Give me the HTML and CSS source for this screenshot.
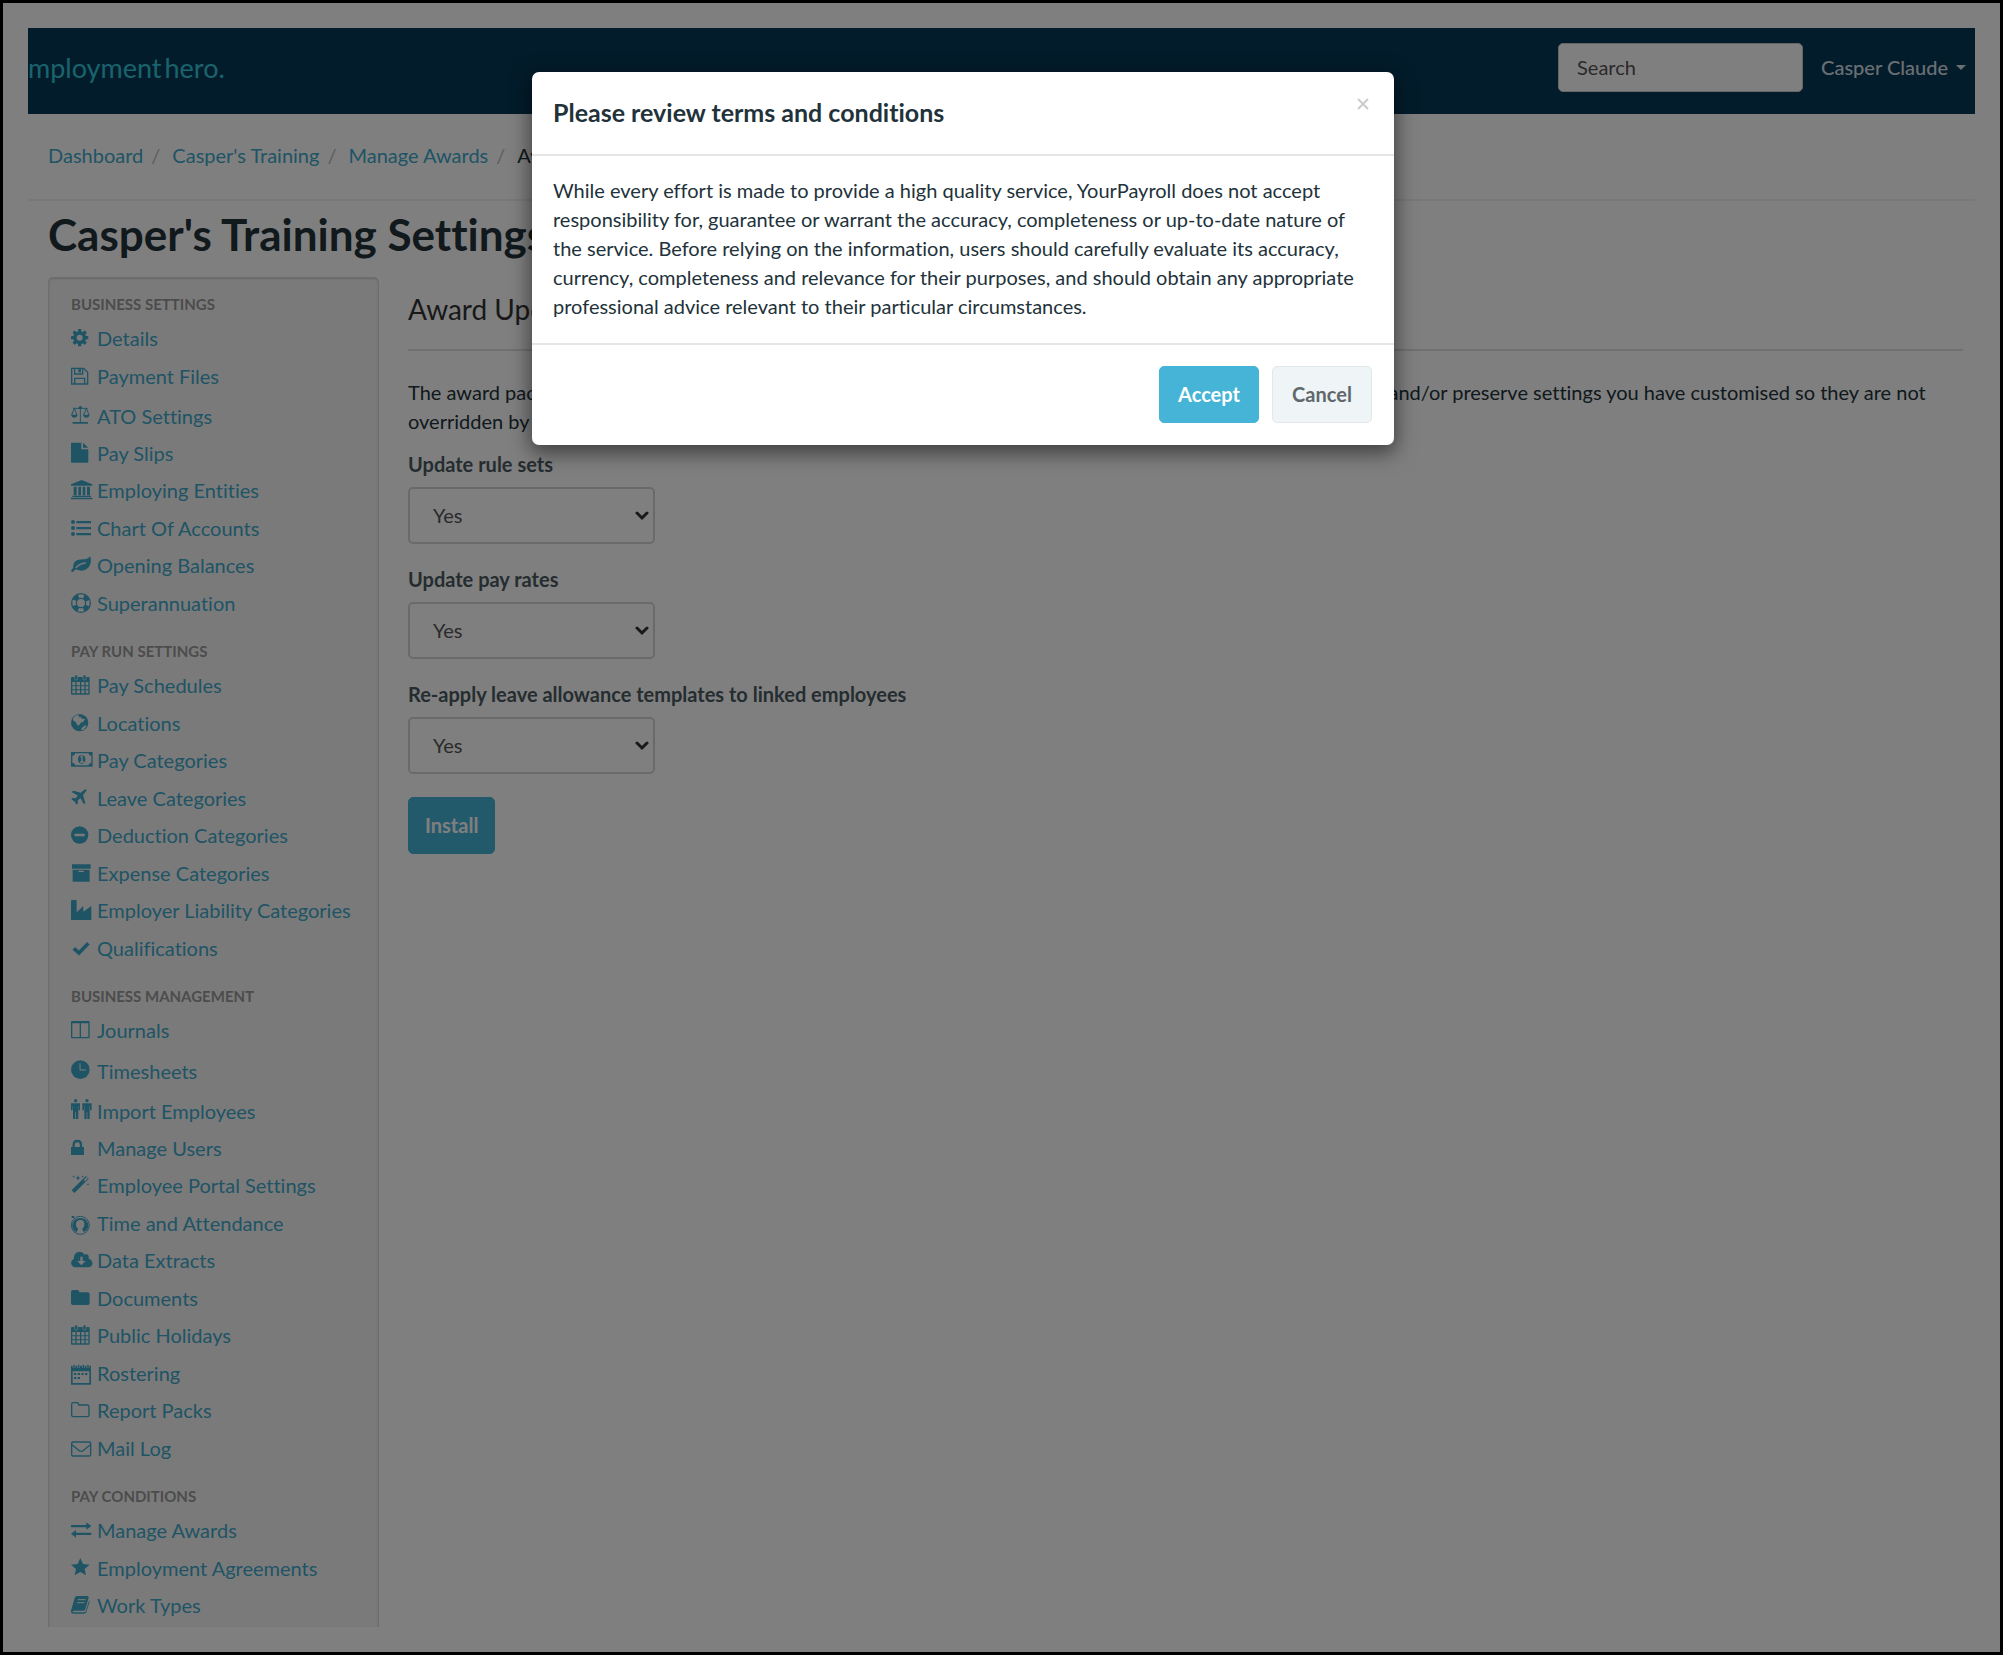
FILE: index.html
```html
<!DOCTYPE html>
<html lang="en">
<head>
<meta charset="utf-8">
<title>Award Update</title>
<link rel="stylesheet" href="styles.css">
</head>
<body>
<svg class="sprite" aria-hidden="true">
  <symbol id="cog" viewBox="0 0 66 66"><g fill="currentColor"><rect x="21" y="3" width="10" height="52" rx="2"/><rect x="21" y="3" width="10" height="52" rx="2" transform="rotate(45 26 29)"/><rect x="21" y="3" width="10" height="52" rx="2" transform="rotate(90 26 29)"/><rect x="21" y="3" width="10" height="52" rx="2" transform="rotate(135 26 29)"/></g><circle cx="26" cy="29" r="14" fill="none" stroke="currentColor" stroke-width="11"/><circle cx="26" cy="29" r="9" fill="#f5f5f5"/></symbol>
  <symbol id="floppy" viewBox="0 0 66 66"><path d="M2 7h36l12 12v35H2zM11 54V37h30v17M11 7v17h24V7" fill="none" stroke="currentColor" stroke-width="4"/><path d="M22 7h8v12h-8z" fill="currentColor"/></symbol>
  <symbol id="scale" viewBox="0 0 66 66"><path d="M28 0v48M6 7h44M10 7L2 27M10 7l8 20M46 7l-8 20M46 7l8 20" fill="none" stroke="currentColor" stroke-width="3"/><path d="M0 26h20q-2 9-10 9T0 26zM36 26h20q-2 9-10 9t-10-9zM5 48h46v5H5z" fill="currentColor"/><circle cx="28" cy="5" r="5" fill="currentColor"/></symbol>
  <symbol id="file" viewBox="0 0 66 66"><path d="M0 1q0-2 2-2h29v20h21v38q0 2-2 2H2q-2 0-2-2zM36-1l16 15H36z" fill="currentColor"/></symbol>
  <symbol id="bank" viewBox="0 0 66 66"><path d="M32 0l32 13v4H0v-4zM8 20h9v26H8zM22 20h8v26h-8zM35 20h8v26h-8zM48 20h9v26h-9zM4 47h56v4H4zM0 53h64v5H0z" fill="currentColor"/></symbol>
  <symbol id="list" viewBox="0 0 66 66"><path d="M16 9h44v7H16zM16 27h44v7H16zM16 45h44v7H16z" fill="currentColor"/><circle cx="6" cy="12" r="6" fill="currentColor"/><circle cx="6" cy="30" r="6" fill="currentColor"/><circle cx="6" cy="48" r="6" fill="currentColor"/></symbol>
  <symbol id="leaf" viewBox="0 0 66 66"><path d="M58 4c6 22-4 42-26 43-8 0-14-4-19-3-4 1-5 7-9 7-5-1-5-5 0-9 3-2 2-5 3-12C11 12 29 14 41 13c9-1 11-5 17-9z" fill="currentColor"/><path d="M15 38c8-9 15-13 28-14" fill="none" stroke="#f5f5f5" stroke-width="4" stroke-linecap="round"/></symbol>
  <symbol id="ring" viewBox="0 0 66 66"><circle cx="30" cy="30" r="28" fill="none" stroke="currentColor" stroke-width="4"/><circle cx="30" cy="30" r="14" fill="none" stroke="currentColor" stroke-width="4"/><circle cx="30" cy="30" r="21" fill="none" stroke="currentColor" stroke-width="13" stroke-dasharray="17 16" stroke-dashoffset="-8"/></symbol>
  <symbol id="calendar" viewBox="0 0 66 66"><path d="M0 9q0-3 3-3h50q3 0 3 3v47q0 3-3 3H3q-3 0-3-3zM4 21v10h9V21zm13 0v10h10V21zm14 0v10h9V21zm13 0v10h8V21zM4 34v9h9v-9zm13 0v9h10v-9zm14 0v9h9v-9zm13 0v9h8v-9zM4 46v9h9v-9zm13 0v9h10v-9zm14 0v9h9v-9zm13 0v9h8v-9z" fill="currentColor" fill-rule="evenodd"/><rect x="11" y="0" width="9" height="15" rx="4" fill="currentColor" stroke="#f5f5f5" stroke-width="2"/><rect x="36" y="0" width="9" height="15" rx="4" fill="currentColor" stroke="#f5f5f5" stroke-width="2"/></symbol>
  <symbol id="globe" viewBox="0 0 66 66"><circle cx="26" cy="29" r="26" fill="currentColor"/><path d="M10 11c5-5 10-5 15-4l-3 6 7-1 4 5 9 1-5 8-8 3-6 9-5-3-3-7-7-4-3-7zM33 44l10-8 3 4-8 10-8 1z" fill="#f5f5f5"/></symbol>
  <symbol id="money" viewBox="0 0 66 66"><path d="M0 6h65v44H0zM4 17v22q8 0 8 7h41q0-7 8-7V17q-8 0-8-7H12q0 7-8 7z" fill="currentColor" fill-rule="evenodd"/><ellipse cx="32" cy="28" rx="11" ry="13" fill="currentColor"/><path d="M28 21l5-3v17M27 36h12" fill="none" stroke="#f5f5f5" stroke-width="4"/></symbol>
  <symbol id="plane" viewBox="0 0 66 66"><path d="M46 4c2 5-3 10-10 17l7 24-4 4-11-19-8 8 1 8-4 4-6-9-10-7 4-4 8 1 8-8L2 12l5-4 23 6C37 8 42 3 46 4z" fill="currentColor"/></symbol>
  <symbol id="minus" viewBox="0 0 66 66"><circle cx="26" cy="30" r="26" fill="currentColor"/><rect x="11" y="26" width="30" height="8" rx="2" fill="#f5f5f5"/></symbol>
  <symbol id="archive" viewBox="0 0 66 66"><path d="M3 4h56v13H3zM5 20h51v36H5z" fill="currentColor"/><rect x="22" y="23" width="17" height="4" rx="2" fill="#f5f5f5"/></symbol>
  <symbol id="industry" viewBox="0 0 66 66"><path d="M0 60V3q0-3 3-3h11q3 0 3 3v34l20-19v17l24-17v42z" fill="currentColor"/></symbol>
  <symbol id="check" viewBox="0 0 66 66"><path d="M8 31l16 14 28-29" fill="none" stroke="currentColor" stroke-width="11"/></symbol>
  <symbol id="columns" viewBox="0 0 66 66"><path d="M0 6q0-3 3-3h50q3 0 3 3v46q0 3-3 3H3q-3 0-3-3zM4 10v41h22V10zm26 0v41h22V10z" fill="currentColor" fill-rule="evenodd"/></symbol>
  <symbol id="clock" viewBox="0 0 66 66"><circle cx="28" cy="26" r="28" fill="currentColor"/><path d="M27 7v20h18" fill="none" stroke="#f5f5f5" stroke-width="3"/></symbol>
  <symbol id="people" viewBox="0 0 66 66"><g fill="currentColor"><circle cx="14" cy="-1" r="5"/><path d="M0 7h27v21h-4V16h-1v38h-7V34h-2v20H6V16H5v12H0z"/><circle cx="48" cy="-1" r="5"/><path d="M34 7h28v21h-5V16h-1v38h-7V34h-2v20h-7V16h-1v12h-5z"/></g></symbol>
  <symbol id="lock" viewBox="0 0 66 66"><path d="M0 27h39v24H0z" fill="currentColor"/><path d="M8 28V20q0-11 11-11t11 11v8" fill="none" stroke="currentColor" stroke-width="7"/></symbol>
  <symbol id="magic" viewBox="0 0 66 66"><path d="M6 50L49 7" stroke="currentColor" stroke-width="12"/><path d="M40 17l9-9" stroke="#f5f5f5" stroke-width="5"/><path d="M21 1l2 6 6 2-6 2-2 6-2-6-6-2 6-2zM8 1l1 3 3 1-3 1-1 3-1-3-3-1 3-1zM35 0l1 3 3 1-3 1-1 3-1-3-3-1 3-1zM51 24l1 3 3 1-3 1-1 3-1-3-3-1 3-1z" fill="currentColor"/></symbol>
  <symbol id="attendance" viewBox="0 0 66 66"><circle cx="28" cy="37" r="27" fill="none" stroke="currentColor" stroke-width="3"/><path d="M17 58c0-6 5-6 4-11-5-4-6-9-6-14q1-12 13-12t12 12c0 5-1 10-6 14-1 5 4 5 4 11 15-6 18-22 10-33C38 12 18 12 8 25 0 36 3 52 17 58z" fill="currentColor"/><path d="M2 9h8v6H2z" fill="currentColor"/></symbol>
  <symbol id="cloud" viewBox="0 0 66 66"><path d="M15 52C-1 52-5 32 9 26 6 7 31-3 40 14c9-4 16 3 13 12 17 5 14 26-1 26z" fill="currentColor"/><path d="M28 20h7v13h9L31 46 19 33h9z" fill="#f5f5f5"/></symbol>
  <symbol id="folder" viewBox="0 0 66 66"><path d="M0 12q0-6 6-6h13q6 0 6 7h25q6 0 6 6v26q0 6-6 6H6q-6 0-6-6z" fill="currentColor"/></symbol>
  <symbol id="roster" viewBox="0 0 66 66"><path d="M0 8h60v57H0zM5 25v35h50V25z" fill="currentColor" fill-rule="evenodd"/><path d="M9 4v11M23 4v11M37 4v11M51 4v11" stroke="#f5f5f5" stroke-width="8"/><path d="M9 5v11M23 5v11M37 5v11M51 5v11" stroke="currentColor" stroke-width="4"/><path d="M9 33h44M9 45h22" stroke="currentColor" stroke-width="6" stroke-dasharray="7 4"/></symbol>
  <symbol id="folder-o" viewBox="0 0 66 66"><path d="M2 13q0-5 5-5h11q5 0 5 7h26q5 0 5 5v25q0 5-5 5H7q-5 0-5-5z" fill="none" stroke="currentColor" stroke-width="4"/></symbol>
  <symbol id="mail" viewBox="0 0 66 66"><rect x="2" y="12" width="57" height="42" rx="4" fill="none" stroke="currentColor" stroke-width="4"/><path d="M3 20l22 18q5 4 11 0l22-18" fill="none" stroke="currentColor" stroke-width="4"/></symbol>
  <symbol id="exchange" viewBox="0 0 66 66"><path d="M0 15h46V7l15 11-15 11v-7H0zM61 38H15v-8L0 41l15 12v-8h46z" fill="currentColor"/></symbol>
  <symbol id="star" viewBox="0 0 66 66"><path d="M28 0l8 18 20 2-15 13 4 19-17-10-17 10 4-19L0 20l20-2z" fill="currentColor"/></symbol>
  <symbol id="book" viewBox="0 0 66 66"><path d="M17 3h32q5 0 4 5L43 43q-1 4-6 4H9q-5 0-4 3 1 2 4 2h31q3 0 4-3L55 15q2 3 0 8l-9 28q-2 5-7 5H8q-9 0-8-9L11 9q2-6 6-6z" fill="currentColor"/><path d="M21 14h23M18 23h23" stroke="#f5f5f5" stroke-width="3"/></symbol>
</svg>
<div class="frame">
  <header class="topbar">
    <a class="brand" href="#">mployment<span>hero.</span></a>
    <div class="topbar-tools">
      <input class="search" type="text" placeholder="Search" aria-label="Search">
      <a class="user" href="#">Casper Claude<span class="caret"></span></a>
    </div>
  </header>
  <nav class="crumbs" aria-label="Breadcrumb">
    <ol>
      <li><a href="#">Dashboard</a></li>
      <li><a href="#">Casper's Training</a></li>
      <li><a href="#">Manage Awards</a></li>
      <li>Award Update</li>
    </ol>
  </nav>
  <h1>Casper's Training Settings</h1>
  <div class="columns">
    <nav class="sidebar" aria-label="Settings">
      <h2>Business settings</h2>
      <ul>
        <li><a href="#"><svg><use href="#cog"/></svg>Details</a></li>
        <li><a href="#"><svg><use href="#floppy"/></svg>Payment Files</a></li>
        <li class="tall"><a href="#"><svg><use href="#scale"/></svg>ATO Settings</a></li>
        <li><a href="#"><svg><use href="#file"/></svg>Pay Slips</a></li>
        <li><a href="#"><svg><use href="#bank"/></svg>Employing Entities</a></li>
        <li><a href="#"><svg><use href="#list"/></svg>Chart Of Accounts</a></li>
        <li><a href="#"><svg><use href="#leaf"/></svg>Opening Balances</a></li>
        <li><a href="#"><svg><use href="#ring"/></svg>Superannuation</a></li>
      </ul>
      <h2>Pay run settings</h2>
      <ul>
        <li><a href="#"><svg><use href="#calendar"/></svg>Pay Schedules</a></li>
        <li><a href="#"><svg><use href="#globe"/></svg>Locations</a></li>
        <li><a href="#"><svg><use href="#money"/></svg>Pay Categories</a></li>
        <li><a href="#"><svg><use href="#plane"/></svg>Leave Categories</a></li>
        <li><a href="#"><svg><use href="#minus"/></svg>Deduction Categories</a></li>
        <li><a href="#"><svg><use href="#archive"/></svg>Expense Categories</a></li>
        <li><a href="#"><svg><use href="#industry"/></svg>Employer Liability Categories</a></li>
        <li><a href="#"><svg><use href="#check"/></svg>Qualifications</a></li>
      </ul>
      <h2>Business management</h2>
      <ul>
        <li><a href="#"><svg><use href="#columns"/></svg>Journals</a></li>
        <li class="tall"><a href="#"><svg><use href="#clock"/></svg>Timesheets</a></li>
        <li class="tall"><a href="#"><svg><use href="#people"/></svg>Import Employees</a></li>
        <li><a href="#"><svg><use href="#lock"/></svg>Manage Users</a></li>
        <li><a href="#"><svg><use href="#magic"/></svg>Employee Portal Settings</a></li>
        <li><a href="#"><svg><use href="#attendance"/></svg>Time and Attendance</a></li>
        <li><a href="#"><svg><use href="#cloud"/></svg>Data Extracts</a></li>
        <li><a href="#"><svg><use href="#folder"/></svg>Documents</a></li>
        <li><a href="#"><svg><use href="#calendar"/></svg>Public Holidays</a></li>
        <li><a href="#"><svg><use href="#roster"/></svg>Rostering</a></li>
        <li><a href="#"><svg><use href="#folder-o"/></svg>Report Packs</a></li>
        <li><a href="#"><svg><use href="#mail"/></svg>Mail Log</a></li>
      </ul>
      <h2>Pay conditions</h2>
      <ul>
        <li><a href="#"><svg><use href="#exchange"/></svg>Manage Awards</a></li>
        <li><a href="#"><svg><use href="#star"/></svg>Employment Agreements</a></li>
        <li><a href="#"><svg><use href="#book"/></svg>Work Types</a></li>
      </ul>
    </nav>
    <main class="content">
      <h2>Award Update</h2>
      <p>The award package has been updated. Use the options below to choose which parts of the new award to install, and/or preserve settings you have customised so they are not overridden by the update.</p>
      <form>
        <div class="field">
          <label for="rules">Update rule sets</label>
          <div class="picker"><select id="rules"><option>Yes</option><option>No</option></select><svg viewBox="0 0 14 10"><path d="M2 2l5 5 5-5"/></svg></div>
        </div>
        <div class="field">
          <label for="rates">Update pay rates</label>
          <div class="picker"><select id="rates"><option>Yes</option><option>No</option></select><svg viewBox="0 0 14 10"><path d="M2 2l5 5 5-5"/></svg></div>
        </div>
        <div class="field">
          <label for="leave">Re-apply leave allowance templates to linked employees</label>
          <div class="picker"><select id="leave"><option>Yes</option><option>No</option></select><svg viewBox="0 0 14 10"><path d="M2 2l5 5 5-5"/></svg></div>
        </div>
        <button class="btn primary" type="button">Install</button>
      </form>
    </main>
  </div>
  <div class="overlay">
    <section class="modal" role="dialog" aria-modal="true" aria-labelledby="modal-title">
      <header class="modal-head">
        <h2 id="modal-title">Please review terms and conditions</h2>
        <button class="close" type="button" aria-label="Close"><svg viewBox="0 0 12 12"><path d="M1 1l10 10M11 1L1 11"/></svg></button>
      </header>
      <div class="modal-body">While every effort is made to provide a high quality service, YourPayroll does not accept responsibility for, guarantee or warrant the accuracy, completeness or up-to-date nature of the service. Before relying on the information, users should carefully evaluate its accuracy, currency, completeness and relevance for their purposes, and should obtain any appropriate professional advice relevant to their particular circumstances.</div>
      <footer class="modal-foot">
        <button class="btn primary" type="button">Accept</button>
        <button class="btn plain" type="button">Cancel</button>
      </footer>
    </section>
  </div>
</div>
</body>
</html>
```
FILE: styles.css
```css
* { box-sizing: border-box; }
body {
  margin: 0;
  font: 20px/29px Lato, "Liberation Sans", sans-serif;
  font-variant-ligatures: none;
  color: #22323a;
  background: #fff;
}
a { color: #3fa9cb; text-decoration: none; }
h1, h2, p, ul, ol { margin: 0; padding: 0; }
ul, ol { list-style: none; }
button, input, select { font: inherit; }
.sprite { position: absolute; width: 0; height: 0; }
.sprite symbol { overflow: visible; }

.frame {
  position: relative;
  min-height: 100vh;
  border: 3px solid #000;
  padding: 25px;
}

.topbar {
  display: flex;
  align-items: center;
  justify-content: space-between;
  height: 86px;
  padding-right: 9px;
  background: #063956;
}
.brand { display: flex; gap: 3px; font-size: 27px; line-height: 40px; color: #34c6da; padding-bottom: 6px; }
.topbar-tools { display: flex; align-items: center; gap: 18px; padding-bottom: 8px; }
.search {
  width: 245px;
  height: 49px;
  padding: 0 18px;
  border: 1px solid #ccc;
  border-radius: 5px;
  background: #fff;
}
.search::placeholder { color: #555; opacity: 1; }
.user { display: flex; align-items: center; gap: 8px; font-weight: 500; color: #d5dfe5; }
.caret { border: 5px solid transparent; border-top-color: currentColor; border-bottom: 0; }

.crumbs { padding: 27px 20px 29px; border-bottom: 2px solid #f0f0f0; }
.crumbs ol { display: flex; }
.crumbs li + li::before { content: "/"; color: #bbb; padding: 0 12px 0 8px; }

h1 { padding: 6px 20px 0; font-size: 44px; line-height: 54px; font-weight: 700; }

.columns { display: flex; align-items: flex-start; gap: 29px; padding: 16px 12px 0 20px; }
.sidebar {
  flex: 0 0 331px;
  padding: 0 22px 2px;
  border: 1px solid #dcdcdc;
  border-bottom: 0;
  border-radius: 5px 5px 0 0;
  background: #f5f5f5;
  box-shadow: inset 0 1px 2px #ccc;
}
.sidebar h2 {
  padding-top: 13px;
  font-size: 15px;
  line-height: 32px;
  font-weight: 700;
  text-transform: uppercase;
  color: #999;
}
.sidebar h2:first-child { padding-top: 10px; }
.sidebar li { height: 37px; }
.sidebar li:nth-child(odd) { height: 38px; }
.sidebar li.tall { height: 40px; padding-top: 3px; }
.sidebar a { display: flex; align-items: center; gap: 4px; height: 37px; white-space: nowrap; }
.sidebar a svg { width: 22px; height: 22px; overflow: visible; }

.content { flex: 1; }
.content h2 {
  padding: 12px 0 20px;
  border-bottom: 2px solid #e0e0e0;
  font-size: 28px;
  line-height: 40px;
  font-weight: 400;
  color: #333;
}
.content p { padding: 27px 0 0; }
.field { padding-top: 14px; }
.field + .field { padding-top: 21px; }
.field label { display: block; font-weight: 700; color: #4a5a60; padding-bottom: 8px; }
.picker { display: grid; width: 247px; }
.picker select, .picker svg { grid-area: 1 / 1; }
.picker select {
  appearance: none;
  height: 57px;
  padding: 0 23px;
  border: 2px solid #d5d5d5;
  border-radius: 5px;
  background: #fff;
  color: #555;
}
.picker svg { width: 14px; height: 10px; margin-right: 6px; place-self: center end; pointer-events: none; }
.picker path { fill: none; stroke: #333; stroke-width: 3; stroke-linecap: round; }

.btn { height: 57px; padding: 0 16px; border: 1px solid; border-radius: 5px; font-weight: 700; }
.primary { color: #fff; background: #46b4d6; border-color: #46b4d6; }
.plain { color: #5f686c; background: #eff4f6; border-color: #e2e7e9; }
form .btn { margin-top: 23px; }

.overlay {
  position: absolute;
  inset: 0;
  display: flex;
  align-items: flex-start;
  justify-content: center;
  padding: 69px 77px 0 0;
  background: rgba(0, 0, 0, .5);
}
.modal {
  width: 862px;
  border-radius: 7px;
  background: #fff;
  box-shadow: 0 6px 20px 2px rgba(0, 0, 0, .5);
}
.modal-head { display: flex; justify-content: space-between; padding: 20px 25px 22px 21px; border-bottom: 2px solid #e5e5e5; }
.modal-head h2 { font-size: 25px; line-height: 40px; font-weight: 700; }
.close { height: 24px; padding: 0; border: 0; background: none; }
.close svg { display: block; width: 12px; height: 12px; }
.close path { fill: none; stroke: #ccc; stroke-width: 2; }
.modal-body { padding: 20px 21px 22px; }
.modal-foot { display: flex; justify-content: flex-end; gap: 13px; padding: 21px 22px 22px; border-top: 2px solid #e5e5e5; }
.modal-foot .btn { min-width: 100px; }
```
